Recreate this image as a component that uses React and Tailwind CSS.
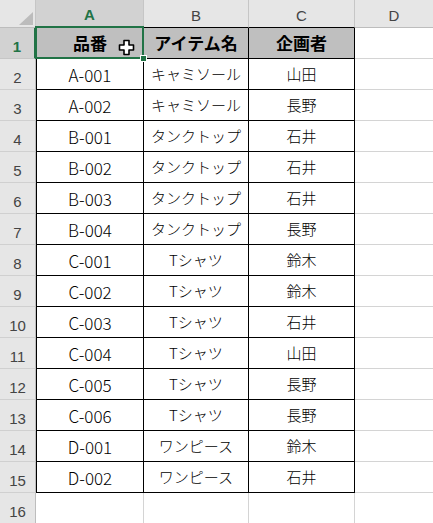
import React from "react";

const rows = [
  ["A-001", "キャミソール", "山田"],
  ["A-002", "キャミソール", "長野"],
  ["B-001", "タンクトップ", "石井"],
  ["B-002", "タンクトップ", "石井"],
  ["B-003", "タンクトップ", "石井"],
  ["B-004", "タンクトップ", "長野"],
  ["C-001", "Tシャツ", "鈴木"],
  ["C-002", "Tシャツ", "鈴木"],
  ["C-003", "Tシャツ", "石井"],
  ["C-004", "Tシャツ", "山田"],
  ["C-005", "Tシャツ", "長野"],
  ["C-006", "Tシャツ", "長野"],
  ["D-001", "ワンピース", "鈴木"],
  ["D-002", "ワンピース", "石井"],
];

const jp = "font-['Noto_Sans_CJK_JP',sans-serif]";
const ui = "font-['Liberation_Sans','Noto_Sans',sans-serif]";

function RowHead({ n, active }) {
  return (
    <div
      className={
        "flex items-end justify-center pb-[4px] leading-none text-[15px] " +
        ui +
        (active
          ? " bg-[#d2d2d2] text-[#217346] font-bold border-r-2 border-r-[#217346] border-b border-b-[#c6c6c6]"
          : " bg-[#e6e6e6] text-[#444] border-r border-r-[#bdbdbd] border-b border-b-[#d0d0d0]")
      }
    >
      {n}
    </div>
  );
}

function Cell({ children, first }) {
  return (
    <div
      className={
        "flex items-center justify-center font-light text-black border-b border-r border-black " +
        jp +
        (first ? " border-l text-[17px] pt-[1px]" : " text-[15px]")
      }
    >
      {children}
    </div>
  );
}

function PlusCursor() {
  return (
    <svg width="17" height="17" viewBox="0 0 17 17" className="absolute left-[81px] top-[11px]">
      <path
        d="M6 1.5h5v4.5h4.5v5H11v4.5H6V11H1.5V6H6z"
        fill="#fff"
        stroke="#000"
        strokeWidth="1.6"
        strokeLinejoin="round"
      />
    </svg>
  );
}

export default function App() {
  return (
    <div className="w-[433px] h-[523px] overflow-hidden bg-white">
      <div className="grid grid-cols-[36px_108px_105px_106px_1fr] grid-rows-[28px_repeat(15,31px)_31px]">
        {/* column headers */}
        <div className="relative bg-[#e6e6e6] border-r border-r-[#c6c6c6] border-b border-b-[#bdbdbd]">
          <svg width="14" height="13" viewBox="0 0 14 13" className="absolute right-[2px] bottom-[2px]">
            <path d="M14 0V13H0z" fill="#bcbcbc" />
          </svg>
        </div>
        <div className={"flex items-center justify-center pt-[5px] bg-[#d2d2d2] text-[#217346] font-bold text-[15px] border-r border-r-[#c6c6c6] border-b-2 border-b-[#217346] " + ui}>
          A
        </div>
        <div className={"flex items-center justify-center pt-[5px] bg-[#e6e6e6] text-[#444] text-[15px] border-r border-r-[#c6c6c6] border-b border-b-black " + ui}>
          B
        </div>
        <div className={"flex items-center justify-center pt-[5px] bg-[#e6e6e6] text-[#444] text-[15px] border-r border-r-[#c6c6c6] border-b border-b-black " + ui}>
          C
        </div>
        <div className={"flex items-center justify-center pt-[5px] bg-[#e6e6e6] text-[#444] text-[15px] border-b border-b-[#bdbdbd] " + ui}>
          D
        </div>

        {/* row 1: table header */}
        <RowHead n={1} active />
        <div className={"relative flex items-center justify-center bg-[#bfbfbf] text-[17px] font-bold text-black border-l border-b border-r border-black " + jp}>
          品番
          <PlusCursor />
          <div className="absolute -left-[2px] -top-[2px] -right-[1px] -bottom-[1px] border-2 border-[#217346]" />
          <div className="absolute -right-[4px] -bottom-[4px] w-[7px] h-[7px] bg-[#217346] border border-white" />
        </div>
        <div className={"flex items-center justify-center bg-[#bfbfbf] text-[17px] font-bold text-black border-b border-r border-black " + jp}>
          アイテム名
        </div>
        <div className={"flex items-center justify-center bg-[#bfbfbf] text-[17px] font-bold text-black border-b border-r border-black " + jp}>
          企画者
        </div>
        <div className="border-b border-[#d4d4d4]" />

        {rows.map((r, i) => (
          <React.Fragment key={r[0]}>
            <RowHead n={i + 2} />
            <Cell first>{r[0]}</Cell>
            <Cell>{r[1]}</Cell>
            <Cell>{r[2]}</Cell>
            <div className="border-b border-[#d4d4d4]" />
          </React.Fragment>
        ))}

        {/* row 16 */}
        <RowHead n={16} />
        <div className="border-l border-l-white border-r border-r-[#d4d4d4]" />
        <div className="border-r border-[#d4d4d4]" />
        <div className="border-r border-[#d4d4d4]" />
        <div />
      </div>
    </div>
  );
}
